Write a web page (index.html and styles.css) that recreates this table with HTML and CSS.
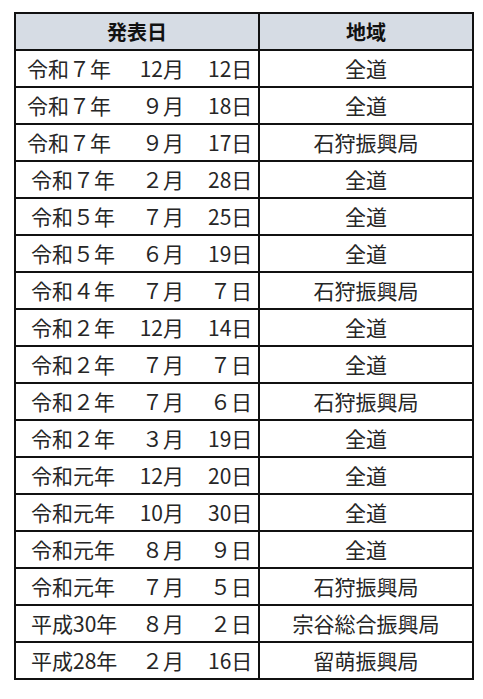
FILE: index.html
```html
<!DOCTYPE html>
<html lang="ja">
<head>
<meta charset="utf-8">
<link rel="stylesheet" href="styles.css">
</head>
<body>
<table class="tbl">
  <thead>
    <tr><th class="c-date">発表日</th><th class="c-area">地域</th></tr>
  </thead>
  <tbody>
    <tr><td class="c-date early"><div class="d"><span class="y">令和７年</span><span class="m">12月</span><span class="dd">12日</span></div></td><td class="c-area">全道</td></tr>
    <tr><td class="c-date early"><div class="d"><span class="y">令和７年</span><span class="m">９月</span><span class="dd">18日</span></div></td><td class="c-area">全道</td></tr>
    <tr><td class="c-date early"><div class="d"><span class="y">令和７年</span><span class="m">９月</span><span class="dd">17日</span></div></td><td class="c-area">石狩振興局</td></tr>
    <tr><td class="c-date"><div class="d"><span class="y">令和７年</span><span class="m">２月</span><span class="dd">28日</span></div></td><td class="c-area">全道</td></tr>
    <tr><td class="c-date"><div class="d"><span class="y">令和５年</span><span class="m">７月</span><span class="dd">25日</span></div></td><td class="c-area">全道</td></tr>
    <tr><td class="c-date"><div class="d"><span class="y">令和５年</span><span class="m">６月</span><span class="dd">19日</span></div></td><td class="c-area">全道</td></tr>
    <tr><td class="c-date"><div class="d"><span class="y">令和４年</span><span class="m">７月</span><span class="dd">７日</span></div></td><td class="c-area">石狩振興局</td></tr>
    <tr><td class="c-date"><div class="d"><span class="y">令和２年</span><span class="m">12月</span><span class="dd">14日</span></div></td><td class="c-area">全道</td></tr>
    <tr><td class="c-date"><div class="d"><span class="y">令和２年</span><span class="m">７月</span><span class="dd">７日</span></div></td><td class="c-area">全道</td></tr>
    <tr><td class="c-date"><div class="d"><span class="y">令和２年</span><span class="m">７月</span><span class="dd">６日</span></div></td><td class="c-area">石狩振興局</td></tr>
    <tr><td class="c-date"><div class="d"><span class="y">令和２年</span><span class="m">３月</span><span class="dd">19日</span></div></td><td class="c-area">全道</td></tr>
    <tr><td class="c-date"><div class="d"><span class="y">令和元年</span><span class="m">12月</span><span class="dd">20日</span></div></td><td class="c-area">全道</td></tr>
    <tr><td class="c-date"><div class="d"><span class="y">令和元年</span><span class="m">10月</span><span class="dd">30日</span></div></td><td class="c-area">全道</td></tr>
    <tr><td class="c-date"><div class="d"><span class="y">令和元年</span><span class="m">８月</span><span class="dd">９日</span></div></td><td class="c-area">全道</td></tr>
    <tr><td class="c-date"><div class="d"><span class="y">令和元年</span><span class="m">７月</span><span class="dd">５日</span></div></td><td class="c-area">石狩振興局</td></tr>
    <tr><td class="c-date"><div class="d"><span class="y">平成30年</span><span class="m">８月</span><span class="dd">２日</span></div></td><td class="c-area">宗谷総合振興局</td></tr>
    <tr><td class="c-date"><div class="d"><span class="y">平成28年</span><span class="m">２月</span><span class="dd">16日</span></div></td><td class="c-area">留萌振興局</td></tr>
  </tbody>
</table>
</body>
</html>
```
FILE: styles.css
```css
html, body {
  margin: 0;
  padding: 0;
  background: #fff;
}
body {
  padding: 12px 0 0 14px;
  font-family: "Noto Sans CJK JP", "Noto Sans", sans-serif;
  color: #262626;
}
.tbl {
  border-collapse: collapse;
  table-layout: fixed;
  width: 460px;
}
.tbl th, .tbl td {
  border: 2px solid #111;
  height: 35px;
  padding: 0;
  font-size: 21px;
  line-height: 35px;
  font-weight: 400;
  text-align: center;
  white-space: nowrap;
}
.tbl th {
  background: #d6dce4;
  font-weight: 700;
  font-size: 20px;
  color: #111;
}
.c-date { width: 242px; }
.c-area { width: 212px; }
.d {
  display: flex;
  align-items: center;
  padding: 0 6px 0 15px;
}
.early .d { padding-left: 11px; }
.y { text-align: left; }
.m {
  margin-left: auto;
  width: 60px;
  text-align: right;
  margin-right: 24px;
}
.dd {
  width: 44px;
  text-align: right;
}
```
